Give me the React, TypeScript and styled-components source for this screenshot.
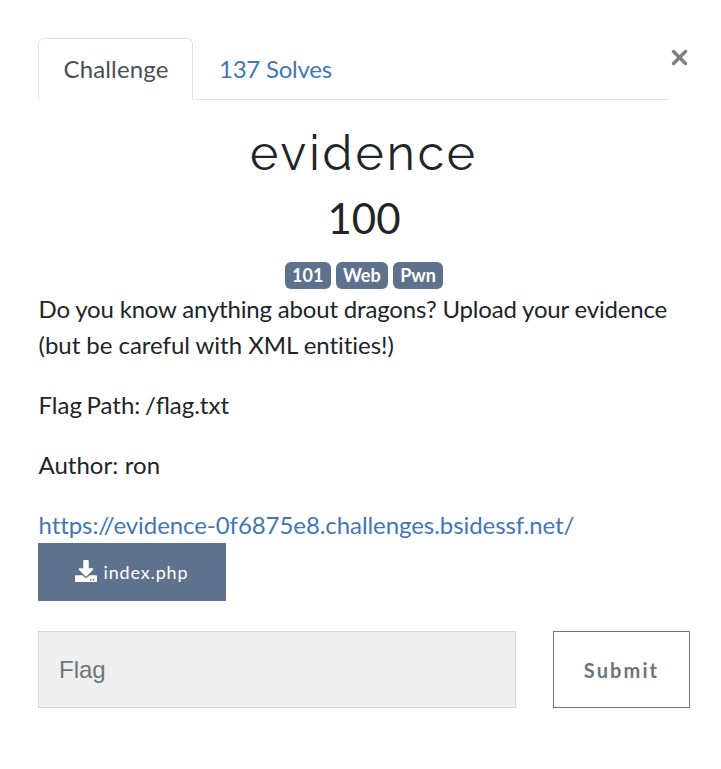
import React from "react";
import styled, { createGlobalStyle } from "styled-components";
import { FaDownload } from "react-icons/fa";

const GlobalStyle = createGlobalStyle`
  * { box-sizing: border-box; }
  body { margin: 0; background: #fff; }
`;

const Modal = styled.main`
  width: 721px;
  height: 769px;
  padding: 38px 31px 0 38px;
  font-family: Lato, sans-serif;
  font-size: 24px;
  line-height: 36px;
  color: #212529;
`;

const Header = styled.div`
  display: flex;
  align-items: flex-start;
`;

const Tabs = styled.nav`
  display: flex;
  flex: none;
  width: 631px;
  height: 62px;
  border-bottom: 1px solid #dee2e6;
`;

const Tab = styled.a<{ $active?: boolean }>`
  height: 62px;
  padding: 12px 25px 0 24.5px;
  border-style: solid;
  border-width: 1px;
  border-color: ${(p) => (p.$active ? "#dee2e6 #dee2e6 #fff" : "transparent")};
  border-radius: 6px 6px 0 0;
  background: ${(p) => (p.$active ? "#fff" : "transparent")};
  color: ${(p) => (p.$active ? "#495057" : "#4377b3")};
  letter-spacing: ${(p) => (p.$active ? "0.14px" : "-0.24px")};
  &:first-child { width: 155px; padding-right: 0; }
  & + & { padding-left: 25px; }
`;

const Close = styled.button`
  display: flex;
  flex: none;
  margin: 9px 0 0 0;
  padding: 2px;
  border: 0;
  background: none;
`;

const Title = styled.h2`
  margin: 24px 0 0;
  width: 652px;
  text-align: center;
  font-family: Raleway, "Open Sans", sans-serif;
  font-weight: 400;
  font-size: 48px;
  line-height: 58px;
  letter-spacing: 3px;
`;

const Points = styled.h3`
  margin: 11px 0 0;
  width: 652px;
  text-align: center;
  font-weight: 400;
  font-size: 42px;
  line-height: 50px;
`;

const Tags = styled.div`
  display: flex;
  justify-content: center;
  gap: 5px;
  width: 652px;
  margin-top: 19px;
`;

const Tag = styled.span`
  height: 27px;
  padding: 0 7.3px;
  border-radius: 6px;
  background: #5f728d;
  color: #fff;
  font-size: 18px;
  font-weight: 700;
  line-height: 27px;
`;

const Text = styled.p<{ $tracking?: number; $wordGap?: number }>`
  margin: 0;
  letter-spacing: ${(p) => (p.$tracking ? `${p.$tracking}px` : "normal")};
  word-spacing: ${(p) => p.$wordGap ?? 0}px;
  white-space: nowrap;
`;

const Description = styled.section`
  margin-top: 2px;
  padding-left: 0.5px;
`;

const Paragraph = styled.div`
  margin-bottom: 24px;
`;

const Link = styled.a`
  display: block;
  color: #4377b3;
  font-variant-ligatures: none;
  letter-spacing: -0.07px;
`;

const FileButton = styled.button`
  display: flex;
  align-items: center;
  justify-content: center;
  gap: 7px;
  width: 188px;
  height: 58px;
  padding: 0 1px 0 0;
  border: 0;
  background: #5f728d;
  color: #fff;
  font: 400 18px Lato, sans-serif;
  letter-spacing: 0.85px;
  svg { margin-bottom: 2px; }
`;

const Form = styled.form`
  display: flex;
  gap: 37px;
  margin-top: 30px;
`;

const FlagInput = styled.input`
  width: 478px;
  height: 77px;
  padding: 0 20px;
  border: 1px solid #ced4da;
  border-radius: 0;
  background: #efefef;
  font: 24px "Liberation Sans", sans-serif;
  &::placeholder { color: #6c757d; opacity: 1; }
`;

const Submit = styled.button`
  width: 137px;
  height: 77px;
  padding: 0;
  border: 1px solid #6c757d;
  background: #fff;
  color: #6c757d;
  font: 700 20px Lato, sans-serif;
  letter-spacing: 2.1px;
`;

export default function App() {
  return (
    <Modal>
      <GlobalStyle />
      <Header>
        <Tabs>
          <Tab $active>Challenge</Tab>
          <Tab>137 Solves</Tab>
        </Tabs>
        <Close aria-label="Close">
          <svg width="18" height="18" viewBox="0 0 18 18">
            <path d="M2.5 2.5l12 12M14.5 2.5l-12 12" stroke="#7f7f7f" strokeWidth="3.4" strokeLinecap="round" />
          </svg>
        </Close>
      </Header>
      <Title>evidence</Title>
      <Points>100</Points>
      <Tags>
        <Tag>101</Tag>
        <Tag>Web</Tag>
        <Tag>Pwn</Tag>
      </Tags>
      <Description>
        <Paragraph>
          <Text $tracking={-0.18}>Do you know anything about dragons? Upload your evidence</Text>
          <Text $tracking={-0.03}>(but be careful with XML entities!)</Text>
        </Paragraph>
        <Paragraph>
          <Text $wordGap={-1.5}>Flag Path: /flag.txt</Text>
        </Paragraph>
        <Paragraph>
          <Text $wordGap={0.5}>Author: ron</Text>
        </Paragraph>
        <Link>https://evidence-0f6875e8.challenges.bsidessf.net/</Link>
      </Description>
      <FileButton type="button"><FaDownload size={22} />index.php</FileButton>
      <Form>
        <FlagInput placeholder="Flag" />
        <Submit type="button">Submit</Submit>
      </Form>
    </Modal>
  );
}
